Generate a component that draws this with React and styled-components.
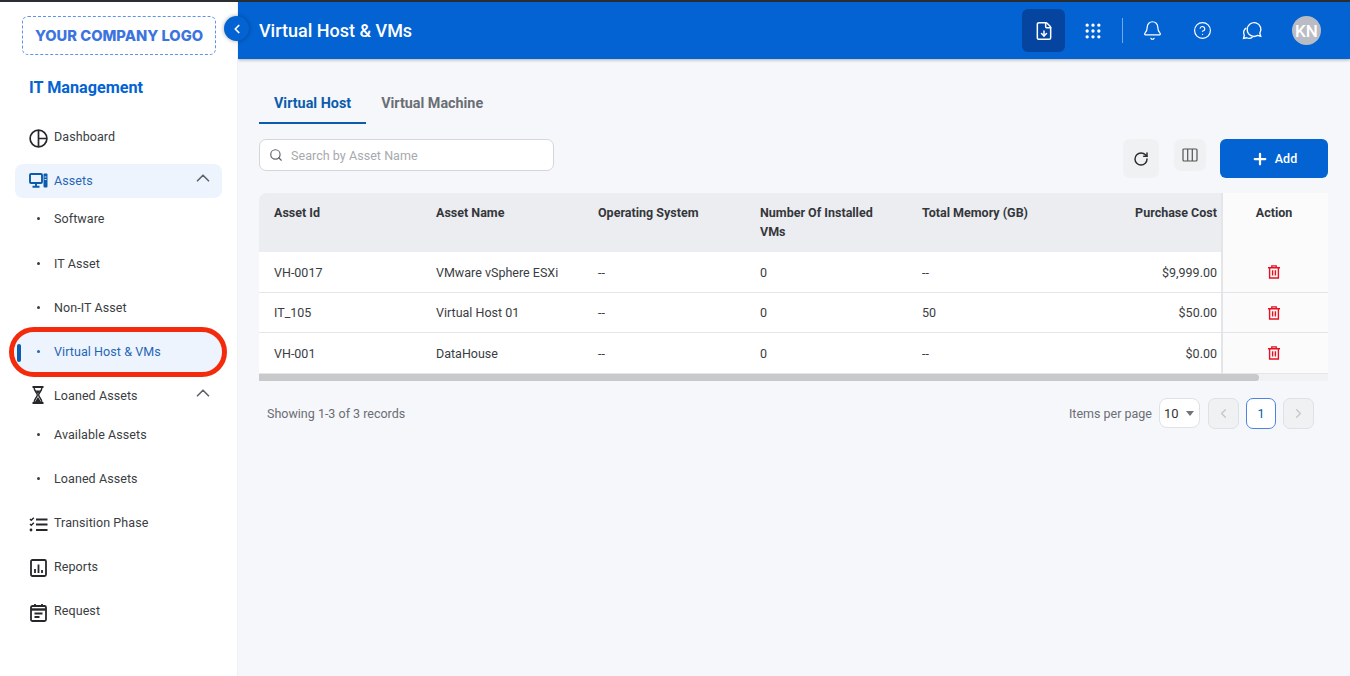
import React from "react";
import styled, { createGlobalStyle } from "styled-components";
import { Bell, ChevronLeft, ChevronRight, ChevronUp, CircleHelp, FileDown, Grip, Plus, RotateCw, Search } from "lucide-react";

const GlobalStyle = createGlobalStyle`
  html, body { margin: 0; padding: 0; height: 100%; overflow: hidden; }
  body { font-family: Roboto, "Liberation Sans", sans-serif; background: #f6f7fa; color: #333; }
  * { box-sizing: border-box; }
`;

const Page = styled.div`
  width: 1350px;
  height: 676px;
  display: flex;
  flex-direction: column;
  overflow: hidden;
`;
const TopLine = styled.div`
  height: 2px;
  flex: none;
  background: #2b2e33;
`;
const Body = styled.div`
  flex: 1;
  display: flex;
  min-height: 0;
`;
const Sidebar = styled.aside`
  position: relative;
  width: 238px;
  flex: none;
  background: #fff;
  padding: 14px 15px 0;
  border-right: 1px solid #f0f1f4;
`;
const LogoBox = styled.div`
  width: 194px;
  height: 39px;
  margin-left: 7px;
  padding-top: 1px;
  border: 1px dashed #5f93ea;
  border-radius: 6px;
  display: flex;
  align-items: center;
  justify-content: center;
  font-family: Inter, sans-serif;
  font-weight: 800;
  font-size: 14.7px;
  color: #3c74df;
  white-space: nowrap;
`;
const CollapseBtn = styled.button`
  position: absolute;
  top: 14px;
  left: 224px;
  width: 25px;
  height: 25px;
  border: 0;
  padding: 0;
  border-radius: 50%;
  background: #0363d3;
  box-shadow: 0 0 4px rgba(0, 0, 0, 0.35);
  color: #fff;
  display: flex;
  align-items: center;
  justify-content: center;
  z-index: 3;
`;
const Product = styled.div`
  margin: 22px 0 0 14px;
  font-size: 16.2px;
  line-height: 22px;
  font-weight: 700;
  color: #0363d3;
`;
const Nav = styled.nav`
  margin-top: 16px;
  display: flex;
  flex-direction: column;
`;
const NavItem = styled.div`
  position: relative;
  height: ${(p) => p.$h || 44}px;
  margin-top: ${(p) => p.$pull || 0}px;
  display: flex;
  align-items: center;
`;
const NavInner = styled.div`
  flex: 1;
  height: ${(p) => (p.$tall ? 42 : 34)}px;
  border-radius: 8px;
  padding: 0 0 2px ${(p) => (p.$sub ? 22 : 14)}px;
  display: flex;
  align-items: center;
  background: ${(p) => (p.$active ? "#eef4fd" : "transparent")};
  color: ${(p) => (p.$active ? "#1f66b5" : "#3a3d42")};
  font-size: 12.5px;
  letter-spacing: 0.08px;
`;
const NavIcon = styled.span`
  width: 25px;
  height: 20px;
  flex: none;
  margin-top: ${(p) => (p.$drop || 0) * 2}px;
  display: flex;
  align-items: center;
  color: ${(p) => (p.$active ? "#0b5cad" : "#25272a")};
`;
const Dot = styled.span`
  width: 3px;
  height: 3px;
  border-radius: 50%;
  background: currentColor;
  margin-right: 14px;
  flex: none;
`;
const Chevron = styled.span`
  position: absolute;
  right: 8px;
  top: 8px;
  display: flex;
  color: #5f6368;
`;
const ActiveMark = styled.span`
  position: absolute;
  left: 2px;
  top: 14px;
  width: 3.5px;
  height: 18px;
  border-radius: 2px;
  background: #0b5cad;
`;
const RedOval = styled.span`
  position: absolute;
  left: -6px;
  top: -3px;
  width: 218px;
  height: 50px;
  border: 5px solid #f32b0c;
  border-radius: 25px;
  pointer-events: none;
`;
const Main = styled.main`
  flex: 1;
  min-width: 0;
  display: flex;
  flex-direction: column;
`;
const Header = styled.header`
  height: 57px;
  flex: none;
  background: #0363d3;
  box-shadow: 0 1px 3px rgba(0, 0, 0, 0.3);
  padding: 0 29px 0 21px;
  display: flex;
  align-items: center;
  color: #fff;
`;
const Title = styled.h1`
  margin: 0;
  flex: 1;
  font-size: 18px;
  font-weight: 500;
`;
const HeaderBtn = styled.span`
  width: ${(p) => p.$w || 43}px;
  height: 43px;
  border-radius: 6px;
  display: flex;
  align-items: center;
  justify-content: center;
  background: ${(p) => (p.$on ? "#0545a0" : "transparent")};
`;
const HeaderDivider = styled.span`
  width: 1px;
  height: 25px;
  background: rgba(255, 255, 255, 0.45);
  margin: 0 8px 0 1px;
`;
const Avatar = styled.span`
  width: 29px;
  height: 29px;
  margin-left: 18px;
  border-radius: 50%;
  background: #b9bcc4;
  color: #fff;
  font-size: 17px;
  font-weight: 500;
  display: flex;
  align-items: center;
  justify-content: center;
`;
const Content = styled.div`
  padding: 28px 22px 0 21px;
`;
const Tabs = styled.div`
  display: flex;
  height: 37px;
`;
const Tab = styled.div`
  padding: 8px 15px 0;
  height: 37px;
  font-size: 14.35px;
  font-weight: 700;
  color: ${(p) => (p.$active ? "#0b5cad" : "#6a6e75")};
  border-bottom: ${(p) => (p.$active ? "2px solid #0b5cad" : "0")};
`;
const Toolbar = styled.div`
  margin-top: 15px;
  height: 54px;
  display: flex;
  align-items: flex-start;
`;
const SearchBox = styled.div`
  width: 295px;
  height: 32px;
  background: #fff;
  border: 1px solid #d4d6da;
  border-radius: 7px;
  padding-left: 9px;
  display: flex;
  align-items: center;
  gap: 8px;
  color: #5f6368;
  font-size: 12.5px;
  span { color: #a6a9ae; letter-spacing: 0.05px; }
`;
const Spacer = styled.div`
  flex: 1;
`;
const ToolBtn = styled.span`
  width: ${(p) => p.$w}px;
  height: ${(p) => p.$h}px;
  margin-right: ${(p) => p.$gap}px;
  border-radius: 7px;
  background: #f0f1f3;
  color: #2b2d30;
  display: flex;
  align-items: center;
  justify-content: center;
`;
const AddBtn = styled.button`
  width: 108px;
  height: 39px;
  padding: 0;
  border: 0;
  border-radius: 6px;
  background: #0363d3;
  color: #fff;
  font: 500 12.5px Roboto, sans-serif;
  display: flex;
  align-items: center;
  justify-content: center;
  gap: 6px;
`;
const Table = styled.div`
  width: 1069px;
`;
const Row = styled.div`
  display: grid;
  grid-template-columns: 162px 162px 162px 162px 162px 152px 107px;
  height: ${(p) => p.$h}px;
  font-size: 12.5px;
  color: #3a3d42;
  background: #fff;
  border-bottom: ${(p) => (p.$plain ? "0" : "1px solid #e4e5e8")};
`;
const HeadRow = styled(Row)`
  background: #ecedf1;
  border-radius: 8px 0 0 0;
  font-weight: 700;
  color: #34373b;
  line-height: 19px;
`;
const Cell = styled.div`
  padding: ${(p) => (p.$head ? 10 : 0)}px ${(p) => (p.$right ? 4 : 20)}px 0 15px;
  display: flex;
  align-items: ${(p) => (p.$head ? "flex-start" : "center")};
  justify-content: ${(p) => (p.$right ? "flex-end" : "flex-start")};
`;
const ActionCell = styled.div`
  background: #fbfbfc;
  border-left: 2px solid #e4e5e8;
  display: flex;
  justify-content: center;
  align-items: ${(p) => (p.$head ? "flex-start" : "center")};
  padding: ${(p) => (p.$head ? 10 : 0)}px 3px 0 0;
`;
const ScrollTrack = styled.div`
  height: 7px;
  background: #f1f2f4;
`;
const ScrollThumb = styled.div`
  width: 1000px;
  height: 7px;
  border-radius: 0 4px 4px 0;
  background: #c8c9cb;
`;
const Footer = styled.div`
  margin-top: 16px;
  width: 1055px;
  height: 32px;
  padding-left: 8px;
  display: flex;
  align-items: center;
  font-size: 12.5px;
  color: #6a6e75;
`;
const PerPage = styled.div`
  width: 41px;
  height: 30px;
  margin: 0 8px 0 7px;
  padding: 0 5px 0 4px;
  background: #fff;
  border: 1px solid #dfe1e5;
  border-radius: 8px;
  color: #333;
  font-size: 13px;
  display: flex;
  align-items: center;
  justify-content: space-between;
  i { border: 4px solid transparent; border-top: 5px solid #70747a; border-bottom: 0; }
`;
const PageBtn = styled.span`
  width: ${(p) => (p.$on ? 30 : 31)}px;
  height: 31px;
  margin-left: ${(p) => (p.$gap ? 7 : 0)}px;
  border-radius: 7px;
  border: 1px solid ${(p) => (p.$on ? "#4c84e0" : "#e0e1e5")};
  background: ${(p) => (p.$on ? "#fff" : "#f0f1f3")};
  color: ${(p) => (p.$on ? "#0b5cad" : "#c3c5c9")};
  display: flex;
  align-items: center;
  justify-content: center;
`;

const DashboardIcon = () => (
  <svg width="19" height="19" viewBox="0 0 19 19" fill="none" stroke="currentColor" strokeWidth="1.7">
    <circle cx="9.5" cy="9.5" r="8.4" />
    <path d="M9.5 1v17M9.5 9.5h8.4" />
  </svg>
);
const AssetsIcon = () => (
  <svg width="19" height="15" viewBox="0 0 19 15" fill="none" stroke="currentColor" strokeWidth="1.9">
    <rect x="1" y="1" width="12" height="9" rx="1" />
    <path d="M7 10v3M3.500 13.800h7" />
    <rect x="14.500" y="0.500" width="4" height="14" rx="1" fill="currentColor" stroke="none" />
    <path d="M15.500 4h2M15.500 6.500h2" stroke="#eef4fd" strokeWidth="0.9" />
  </svg>
);
const HourglassIcon = () => (
  <svg width="19" height="18" viewBox="0 0 19 18" fill="none" stroke="currentColor" strokeWidth="1.4">
    <path d="M3.500 1h11M3.500 17h11" strokeWidth="1.800" />
    <path d="M5 1c0 4.500 3.300 5.500 3.300 8S5 12.500 5 17M13 1c0 4.500-3.300 5.500-3.300 8S13 12.500 13 17" />
    <path d="M5.800 16 9 11l3.200 5zM6.500 4.500h5L9 8z" fill="currentColor" stroke="none" />
  </svg>
);
const TasksIcon = () => (
  <svg width="19" height="15" viewBox="0 0 19 15" fill="none" stroke="currentColor">
    <path d="M1 2l1.300 1.300L4.800 .8M1 7l1.300 1.300L4.800 5.800" strokeWidth="1.500" />
    <circle cx="2" cy="13" r="1.400" fill="currentColor" stroke="none" />
    <path d="M7 2.500h11.500M7 7.500h11.500M7 13h11.500" strokeWidth="2" />
  </svg>
);
const ReportsIcon = () => (
  <svg width="18" height="18" viewBox="0 0 18 18" fill="none" stroke="currentColor" strokeWidth="1.800" style={{ marginLeft: 1 }}>
    <rect x="1" y="1" width="15" height="16" rx="1.500" />
    <path d="M5 14V10M8.500 14V5.500M12 14v-3" />
  </svg>
);
const RequestIcon = () => (
  <svg width="18" height="19" viewBox="0 0 18 19" fill="none" stroke="currentColor" strokeWidth="1.800" style={{ marginLeft: 1 }}>
    <rect x="1" y="3" width="15" height="15" rx="1.500" />
    <path d="M1 6.500h15" strokeWidth="2.400" />
    <path d="M5 1v3M12 1v3M4.500 10.500h8M4.500 14h5" />
  </svg>
);
const ChatIcon = () => (
  <svg width="21" height="21" viewBox="0 0 20 20" fill="none" stroke="currentColor" strokeWidth="1.300">
    <path d="M5 9a6.500 6.500 0 1 1 12 3.500l.8 3-3-.8A6.500 6.500 0 0 1 5 9z" />
    <path d="M4.200 7.500A5 5 0 0 0 2.200 14.500l-.7 3 3-.6a5 5 0 0 0 5.500-.7" />
  </svg>
);
const ColumnsIcon = () => (
  <svg width="16" height="14" viewBox="0 0 16 14" fill="none" stroke="#555" strokeWidth="1.200">
    <rect x="1" y="1" width="14" height="12" rx="1" />
    <path d="M5.700 1v12M10.300 1v12" />
  </svg>
);
const TrashIcon = () => (
  <svg width="12" height="14" viewBox="0 0 12 14" fill="none" stroke="#e8101f" strokeWidth="1.400">
    <path d="M0 2.800h12M3.800 2.800V.9h4.400v1.900" />
    <path d="M1.600 2.800V13h8.800V2.800" />
    <path d="M4.600 5.200v5.300M7.400 5.200v5.300" />
  </svg>
);

const menu = [
  { label: "Dashboard", icon: <DashboardIcon />, drop: 2 },
  { label: "Assets", icon: <AssetsIcon />, active: true, open: true },
  { label: "Software", sub: true, h: 45, pull: -6 },
  { label: "IT Asset", sub: true },
  { label: "Non-IT Asset", sub: true },
  { label: "Virtual Host & VMs", sub: true, active: true, current: true },
  { label: "Loaned Assets", icon: <HourglassIcon />, open: true },
  { label: "Available Assets", sub: true, pull: -5 },
  { label: "Loaned Assets", sub: true },
  { label: "Transition Phase", icon: <TasksIcon />, drop: 2 },
  { label: "Reports", icon: <ReportsIcon />, drop: 2 },
  { label: "Request", icon: <RequestIcon />, drop: 2 },
];

const rows = [
  { id: "VH-0017", name: "VMware vSphere ESXi", os: "--", vms: "0", mem: "--", cost: "$9,999.00", h: 41 },
  { id: "IT_105", name: "Virtual Host 01", os: "--", vms: "0", mem: "50", cost: "$50.00", h: 40 },
  { id: "VH-001", name: "DataHouse", os: "--", vms: "0", mem: "--", cost: "$0.00", h: 41 },
];

export default function App() {
  return (
    <Page>
      <GlobalStyle />
      <TopLine />
      <Body>
        <Sidebar>
          <LogoBox>YOUR COMPANY LOGO</LogoBox>
          <CollapseBtn>
            <ChevronLeft size={14} strokeWidth={3} />
          </CollapseBtn>
          <Product>IT Management</Product>
          <Nav>
            {menu.map((m, i) => (
              <NavItem key={i} $h={m.h} $pull={m.pull}>
                <NavInner $active={m.active} $sub={m.sub} $tall={m.current}>
                  {m.sub ? <Dot /> : <NavIcon $active={m.active} $drop={m.drop}>{m.icon}</NavIcon>}
                  {m.label}
                </NavInner>
                {m.open && (
                  <Chevron>
                    <ChevronUp size={22} strokeWidth={1.800} />
                  </Chevron>
                )}
                {m.current && <ActiveMark />}
                {m.current && <RedOval />}
              </NavItem>
            ))}
          </Nav>
        </Sidebar>
        <Main>
          <Header>
            <Title>Virtual Host & VMs</Title>
            <HeaderBtn $on>
              <FileDown size={20} strokeWidth={1.800} />
            </HeaderBtn>
            <HeaderBtn $w={56}>
              <Grip size={20} strokeWidth={2} />
            </HeaderBtn>
            <HeaderDivider />
            <HeaderBtn $w={43}>
              <Bell size={21} strokeWidth={1.400} />
            </HeaderBtn>
            <HeaderBtn $w={57}>
              <CircleHelp size={19} strokeWidth={1.500} />
            </HeaderBtn>
            <HeaderBtn $w={43}>
              <ChatIcon />
            </HeaderBtn>
            <Avatar>KN</Avatar>
          </Header>
          <Content>
            <Tabs>
              <Tab $active>Virtual Host</Tab>
              <Tab>Virtual Machine</Tab>
            </Tabs>
            <Toolbar>
              <SearchBox>
                <Search size={14} strokeWidth={2} />
                <span>Search by Asset Name</span>
              </SearchBox>
              <Spacer />
              <ToolBtn $w={36} $h={39} $gap={15}>
                <RotateCw size={16} strokeWidth={2.200} />
              </ToolBtn>
              <ToolBtn $w={32} $h={32} $gap={14}>
                <ColumnsIcon />
              </ToolBtn>
              <AddBtn>
                <Plus size={18} strokeWidth={3} />
                Add
              </AddBtn>
            </Toolbar>
            <Table>
              <HeadRow $h={59} $plain>
                <Cell $head>Asset Id</Cell>
                <Cell $head>Asset Name</Cell>
                <Cell $head>Operating System</Cell>
                <Cell $head>Number Of Installed VMs</Cell>
                <Cell $head>Total Memory (GB)</Cell>
                <Cell $head $right>Purchase Cost</Cell>
                <ActionCell $head>Action</ActionCell>
              </HeadRow>
              {rows.map((r) => (
                <Row key={r.id} $h={r.h}>
                  <Cell>{r.id}</Cell>
                  <Cell>{r.name}</Cell>
                  <Cell>{r.os}</Cell>
                  <Cell>{r.vms}</Cell>
                  <Cell>{r.mem}</Cell>
                  <Cell $right>{r.cost}</Cell>
                  <ActionCell>
                    <TrashIcon />
                  </ActionCell>
                </Row>
              ))}
              <ScrollTrack>
                <ScrollThumb />
              </ScrollTrack>
            </Table>
            <Footer>
              Showing 1-3 of 3 records
              <Spacer />
              Items per page
              <PerPage>
                10
                <i />
              </PerPage>
              <PageBtn>
                <ChevronLeft size={15} />
              </PageBtn>
              <PageBtn $on $gap>1</PageBtn>
              <PageBtn $gap>
                <ChevronRight size={15} />
              </PageBtn>
            </Footer>
          </Content>
        </Main>
      </Body>
    </Page>
  );
}
